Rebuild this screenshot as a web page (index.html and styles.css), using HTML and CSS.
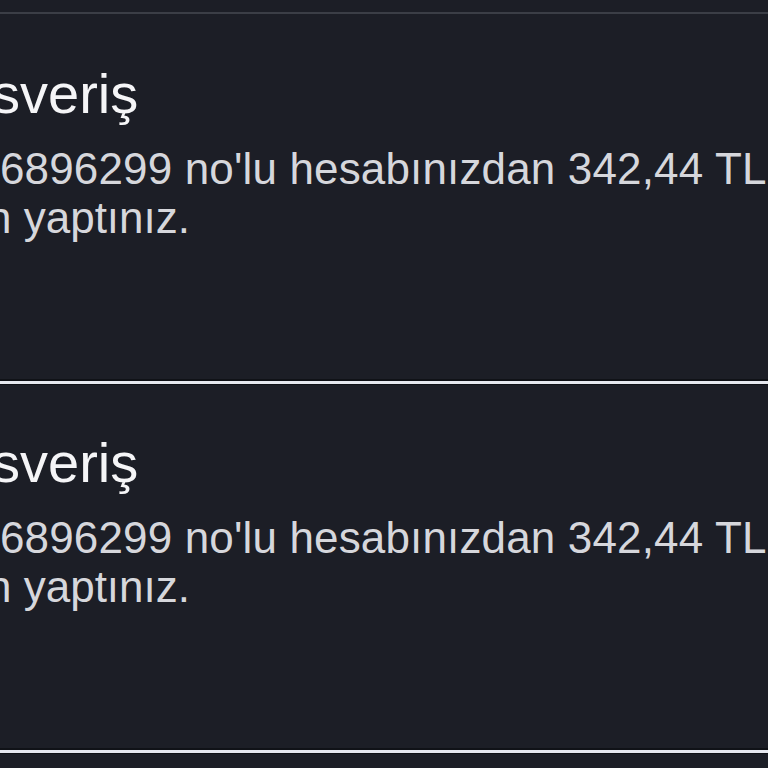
FILE: index.html
```html
<!DOCTYPE html>
<html lang="tr">
<head>
<meta charset="utf-8">
<title>Bildirimler</title>
<link rel="stylesheet" href="styles.css">
</head>
<body>
<div class="screen">
  <div class="topline"></div>
  <div class="card">
    <div class="title">sveriş</div>
    <div class="msg">
      <div class="line line1">6896299 no'lu hesabınızdan 342,44 TL</div>
      <div class="line line2">n yaptınız.</div>
    </div>
  </div>
  <div class="sep"></div>
  <div class="card">
    <div class="title">sveriş</div>
    <div class="msg">
      <div class="line line1">6896299 no'lu hesabınızdan 342,44 TL</div>
      <div class="line line2">n yaptınız.</div>
    </div>
  </div>
  <div class="sep"></div>
</div>
</body>
</html>
```
FILE: styles.css
```css
html, body {
  margin: 0;
  padding: 0;
  background: #1c1e26;
}
body {
  width: 768px;
  height: 768px;
  overflow: hidden;
  font-family: "Liberation Sans", Arial, Helvetica, sans-serif;
}
.screen {
  display: flex;
  flex-direction: column;
}
.topline {
  margin-top: 12px;
  height: 2px;
  margin-bottom: 2px;
  background: #3b3e46;
}
.card {
  box-sizing: border-box;
  height: 363px;
  padding-top: 48px;
  overflow: hidden;
  white-space: nowrap;
}
.title {
  font-size: 56px;
  line-height: 60px;
  color: #f5f5f7;
  margin-left: -8px;
  margin-bottom: 20px;
}
.msg {
  font-size: 44px;
  line-height: 49px;
  color: #d6d7dc;
}
.line1 {
  margin-left: 0;
  letter-spacing: 0.15px;
}
.line2 {
  margin-left: -13px;
}
.sep {
  box-sizing: border-box;
  height: 6px;
  border-top: 2px solid #101217;
  border-bottom: 1px solid #101217;
  background: #e6e8ef;
}
```
